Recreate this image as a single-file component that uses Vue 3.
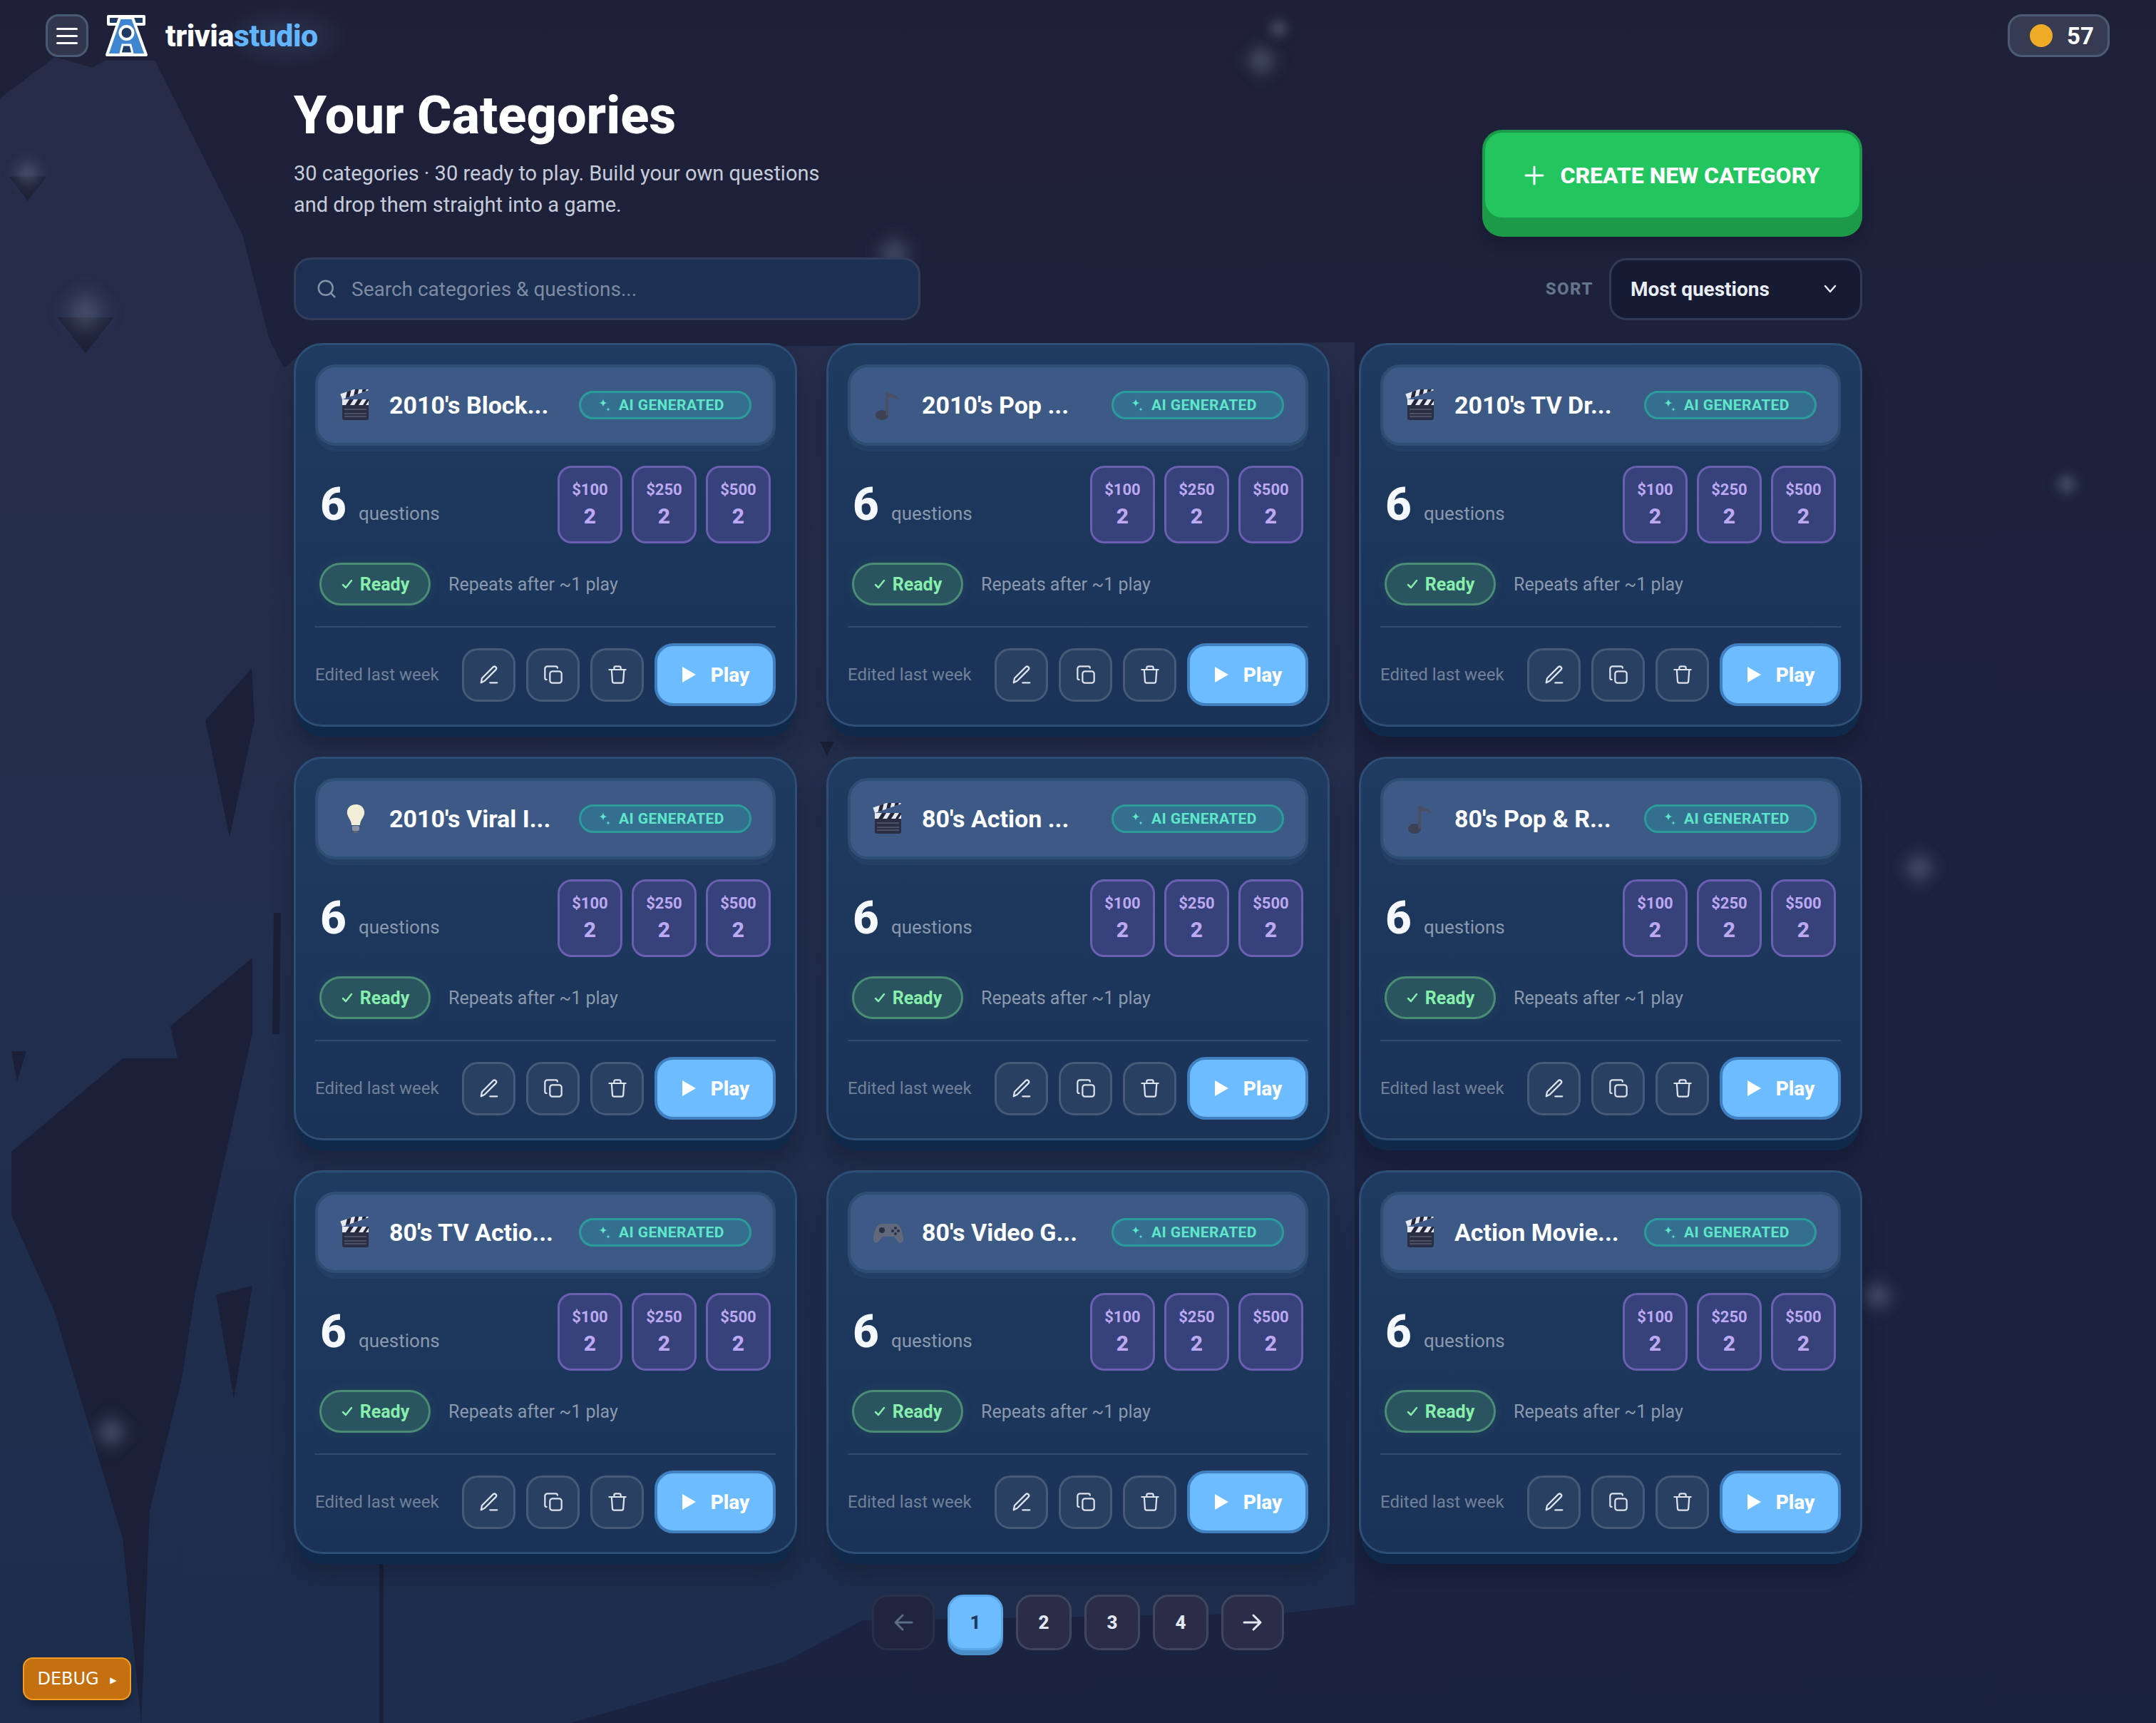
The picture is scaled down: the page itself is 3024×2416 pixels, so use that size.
<template>
  <div class="page">
    <!-- decorative backdrop: hills + sparkles -->
    <svg class="backdrop" width="3024" height="2416" viewBox="0 0 3024 2416">
      <defs>
        <linearGradient id="hill" x1="0" y1="0" x2="0" y2="1">
          <stop offset="0" stop-color="#272c48" />
          <stop offset="0.5" stop-color="#222e4c" />
          <stop offset="1" stop-color="#1d2d4d" />
        </linearGradient>
        <radialGradient id="logoGlow">
          <stop offset="0" stop-color="#2e3552" stop-opacity="0.9" />
          <stop offset="1" stop-color="#2e3552" stop-opacity="0" />
        </radialGradient>
        <filter id="soft" x="-50%" y="-50%" width="200%" height="200%">
          <feGaussianBlur stdDeviation="4" />
        </filter>
      </defs>
      <ellipse cx="400" cy="52" rx="90" ry="46" fill="url(#logoGlow)" />
      <path fill="url(#hill)" d="M0 138 L77 80 L130 95 L147 85 L217 85 L340 329 L377 474 L398 516 L430 490 L1900 480 L1900 2250 L1852 2256 L1800 2262 L1210 2272 L1100 2330 L800 2416 L0 2416 Z" />
      <g fill="#1b2038">
        <path d="M288 1010 L353 937 L357 1010 L322 1174 Z" />
        <path d="M16 1615 L172 1484 L249 1484 L239 1439 L354 1343 L354 1449 L274 1812 L255 1933 L210 2118 L198 2416 L172 2157 L76 1838 L16 1704 Z" />
        <path d="M303 1815 L354 1803 L328 1962 Z" />
        <path d="M16 1474 L37 1474 L24 1516 Z" />
        <path d="M384 1280 L394 1280 L392 1450 L382 1450 Z" />
        <path d="M525 2056 L545 2056 L538 2090 L538 2416 L532 2416 L532 2090 Z" />
        <path d="M1150 1040 L1170 1040 L1160 1060 Z" />
      </g>
      <g v-for="(s, i) in sparkles" :key="i" :transform="`translate(${s.x} ${s.y}) scale(${s.r / 10})`">
        <path v-if="s.dark" d="M-11 2 L0 16 L11 2 Z" fill="#1d2138" />
        <path d="M0 -10 C1 -3 3 -1 10 0 C3 1 1 3 0 10 C-1 3 -3 1 -10 0 C-3 -1 -1 -3 0 -10 Z" fill="#69738c" opacity="0.75" filter="url(#soft)" />
      </g>
    </svg>

    <header class="topbar">
      <div class="brand">
        <button class="menu-btn">
          <span></span><span></span><span></span>
        </button>
        <svg class="logo" width="60" height="60" viewBox="0 0 60 60">
          <rect x="2" y="1" width="54" height="15" rx="2" fill="#fff" />
          <rect x="6" y="5" width="13" height="7" fill="#1e3a60" />
          <rect x="39" y="5" width="13" height="7" fill="#1e3a60" />
          <path d="M20 5 L38 5 L57 57 L2 57 Z" fill="#3f86d0" stroke="#fff" stroke-width="4" stroke-linejoin="round" />
          <circle cx="29.500" cy="26" r="9" fill="#1e3a60" stroke="#fff" stroke-width="4" />
          <path d="M21 55 L24 43 L35 43 L38 55 Z" fill="#1e3a60" stroke="#fff" stroke-width="3" />
        </svg>
        <div class="wordmark">trivia<span>studio</span></div>
      </div>
      <div class="coins">
        <i class="coin"></i>
        <b>57</b>
      </div>
    </header>

    <main class="content">
      <section class="hero">
        <div>
          <h1>Your Categories</h1>
          <p>30 categories · 30 ready to play. Build your own questions<br />and drop them straight into a game.</p>
        </div>
        <button class="create-btn">
          <svg width="28" height="28" viewBox="0 0 28 28" fill="none" stroke="#fff" stroke-width="3" stroke-linecap="round"><path d="M14 2v24M2 14h24" /></svg>
          CREATE NEW CATEGORY
        </button>
      </section>

      <section class="toolbar">
        <div class="search">
          <svg width="30" height="30" viewBox="0 0 24 24" fill="none" stroke="#8492a8" stroke-width="2" stroke-linecap="round"><circle cx="11" cy="11" r="8" /><path d="m21 21-4.300-4.300" /></svg>
          <span>Search categories &amp; questions...</span>
        </div>
        <div class="sort">
          <span class="sort-label">SORT</span>
          <div class="sort-select">
            <span>Most questions</span>
            <svg width="20" height="20" viewBox="0 0 20 20" fill="none" stroke="#e9edf5" stroke-width="2.500" stroke-linecap="round" stroke-linejoin="round"><path d="M3 6l7 8 7-8" /></svg>
          </div>
        </div>
      </section>

      <section class="grid">
        <article v-for="card in cards" :key="card.name" class="card">
          <div class="card-head">
            <svg class="emoji" width="44" height="44" viewBox="0 0 44 44">
              <template v-if="card.icon === 'clapper'">
                <rect x="3" y="21" width="37" height="22" rx="3" fill="#2b2f45" />
                <path d="M6 28h31M6 34h31M6 38h31" stroke="#6c7286" stroke-width="1" />
                <rect x="3" y="14" width="37" height="8" fill="#e6e9f0" />
                <path d="M8 22l5-8h6l-5 8zM20 22l5-8h6l-5 8zM32 22l5-8h3v2l-4 6z" fill="#23263a" />
                <g transform="rotate(-19 3 14)">
                  <rect x="3" y="6" width="39" height="8" fill="#e6e9f0" />
                  <path d="M8 14l5-8h6l-5 8zM20 14l5-8h6l-5 8zM32 14l5-8h5v2l-4 6z" fill="#23263a" />
                </g>
              </template>
              <template v-else-if="card.icon === 'note'">
                <ellipse cx="13" cy="36" rx="9" ry="7" fill="#3c4156" />
                <rect x="18" y="4" width="4" height="32" fill="#4a4f66" />
                <path d="M18 3 C24 7 36 6 37 15 C33 11 26 11 22 12 Z" fill="#4a4f66" />
              </template>
              <template v-else-if="card.icon === 'bulb'">
                <path d="M22 2 C13 2 9 9 10 15 C11 21 16 24 16 31 L28 31 C28 24 33 21 34 15 C35 9 31 2 22 2 Z" fill="#f3efd6" />
                <rect x="17" y="32" width="10" height="7" rx="2" fill="#8d93a3" />
                <rect x="19" y="39" width="6" height="3" rx="1" fill="#5f6578" />
              </template>
              <template v-else>
                <path d="M12 10 H32 C39 10 43 24 43 32 C43 38 37 38 34 33 L30 28 H14 L10 33 C7 38 1 38 1 32 C1 24 5 10 12 10 Z" fill="#62687c" />
                <circle cx="13" cy="19" r="4" fill="#2b2f45" />
                <circle cx="32" cy="16" r="2" fill="#2b2f45" />
                <circle cx="36" cy="20" r="2" fill="#2b2f45" />
                <circle cx="28" cy="20" r="2" fill="#2b2f45" />
                <circle cx="32" cy="24" r="2" fill="#2b2f45" />
              </template>
            </svg>
            <h3>{{ card.name }}</h3>
            <span class="ai-badge">
              <svg width="16" height="20" viewBox="0 0 16 20" fill="#5ee6c9"><path d="M6 1 C6.500 5 8 6.500 12 7 C8 7.500 6.500 9 6 13 C5.500 9 4 7.500 0 7 C4 6.500 5.500 5 6 1 Z" /><path d="M13 13 C13.200 15 14 15.800 16 16 C14 16.200 13.200 17 13 19 C12.800 17 12 16.200 10 16 C12 15.800 12.800 15 13 13 Z" /></svg>
              AI GENERATED
            </span>
          </div>

          <div class="stat-row">
            <div class="count"><b>6</b><span>questions</span></div>
            <div class="prices">
              <div v-for="p in prices" :key="p" class="price">
                <span>{{ p }}</span>
                <b>2</b>
              </div>
            </div>
          </div>

          <div class="status-row">
            <span class="ready">
              <svg width="18" height="18" viewBox="0 0 18 18" fill="none" stroke="#86efac" stroke-width="2.500" stroke-linecap="round" stroke-linejoin="round"><path d="M3 10l4 4 8-10" /></svg>
              Ready
            </span>
            <span class="repeats">Repeats after ~1 play</span>
          </div>

          <div class="card-foot">
            <span class="edited">Edited last week</span>
            <button class="icon-btn">
              <svg width="30" height="30" viewBox="0 0 24 24" fill="none" stroke="#dde4ee" stroke-width="1.800" stroke-linecap="round" stroke-linejoin="round"><path d="M13 21h8" /><path d="M16.500 3.500a2.120 2.120 0 0 1 3 3L7 19l-4 2 1-5Z" /></svg>
            </button>
            <button class="icon-btn">
              <svg width="28" height="28" viewBox="0 0 24 24" fill="none" stroke="#dde4ee" stroke-width="1.900" stroke-linecap="round" stroke-linejoin="round"><rect x="8" y="8" width="14" height="14" rx="3" /><path d="M4 18c-1.100 0-2-.9-2-2V5c0-1.700 1.300-3 3-3h10c1.100 0 2 .9 2 2" /></svg>
            </button>
            <button class="icon-btn">
              <svg width="28" height="28" viewBox="0 0 24 24" fill="none" stroke="#dde4ee" stroke-width="1.900" stroke-linecap="round" stroke-linejoin="round"><path d="M2 6h20" /><path d="M8 6V4a2 2 0 0 1 2-2h4a2 2 0 0 1 2 2v2" /><path d="M20 6l-1 14a2 2 0 0 1-2 2H8a2 2 0 0 1-2-2L5 6" /></svg>
            </button>
            <button class="play-btn">
              <svg width="22" height="24" viewBox="0 0 22 24" fill="#fff"><path d="M2 1 L21 12 L2 23 Z" /></svg>
              Play
            </button>
          </div>
        </article>
      </section>

      <nav class="pager">
        <button class="page-btn wide off">
          <svg width="28" height="28" viewBox="0 0 28 28" fill="none" stroke="#5b6c85" stroke-width="3" stroke-linecap="round" stroke-linejoin="round"><path d="M26 14H3M13 4L3 14l10 10" /></svg>
        </button>
        <button v-for="n in 4" :key="n" class="page-btn" :class="{ active: n === 1 }">{{ n }}</button>
        <button class="page-btn wide">
          <svg width="28" height="28" viewBox="0 0 28 28" fill="none" stroke="#e2e8f0" stroke-width="3" stroke-linecap="round" stroke-linejoin="round"><path d="M2 14h23M15 4l10 10-10 10" /></svg>
        </button>
      </nav>
    </main>

    <button class="debug">DEBUG <small>▶</small></button>
  </div>
</template>

<script setup>
const prices = ['$100', '$250', '$500']

const cards = [
  { name: "2010's Block...", icon: 'clapper' },
  { name: "2010's Pop ...", icon: 'note' },
  { name: "2010's TV Dr...", icon: 'clapper' },
  { name: "2010's Viral I...", icon: 'bulb' },
  { name: "80's Action ...", icon: 'clapper' },
  { name: "80's Pop & R...", icon: 'note' },
  { name: "80's TV Actio...", icon: 'clapper' },
  { name: "80's Video G...", icon: 'game' },
  { name: 'Action Movie...', icon: 'clapper' }
]

// background sparkles
const sparkles = [
  { x: 1793, y: 40, r: 18 },
  { x: 1769, y: 85, r: 28 },
  { x: 1254, y: 355, r: 30 },
  { x: 39, y: 243, r: 24, dark: true },
  { x: 120, y: 438, r: 36, dark: true },
  { x: 2899, y: 679, r: 20 },
  { x: 2692, y: 1217, r: 28 },
  { x: 2633, y: 1817, r: 28 },
  { x: 156, y: 2008, r: 28 }
]
</script>

<style>
body {
  margin: 0;
  background: #1c2240;
}
</style>

<style scoped>
.page {
  position: relative;
  width: 3024px;
  height: 2416px;
  overflow: hidden;
  background: linear-gradient(180deg, #1e2037 0%, #1d2240 50%, #1a2340 100%);
  font-family: Roboto, "Noto Sans", sans-serif;
  color: #fff;
}
.backdrop {
  position: absolute;
  left: 0;
  top: 0;
}
button {
  font-family: inherit;
  cursor: pointer;
  padding: 0;
}
.topbar,
.content {
  position: relative;
}

/* top bar */
.topbar {
  display: flex;
  justify-content: space-between;
  align-items: center;
  padding: 20px 65px 0 64px;
}
.brand {
  display: flex;
  align-items: center;
  gap: 24px;
}
.menu-btn {
  width: 60px;
  height: 60px;
  box-sizing: border-box;
  background: #31364d;
  border: 3px solid #4a5a73;
  border-radius: 18px;
  display: flex;
  flex-direction: column;
  align-items: center;
  justify-content: center;
  gap: 7px;
}
.menu-btn span {
  width: 30px;
  height: 3px;
  border-radius: 2px;
  background: #fff;
}
.logo {
  display: block;
}
.wordmark {
  font-size: 43px;
  font-weight: 800;
  letter-spacing: -0.5px;
}
.wordmark span {
  color: #62b6ff;
}
.coins {
  box-sizing: border-box;
  width: 143px;
  height: 60px;
  display: flex;
  align-items: center;
  gap: 20px;
  padding-left: 28px;
  background: #363b52;
  border: 3px solid #4d5a74;
  border-radius: 20px;
}
.coin {
  width: 32px;
  height: 32px;
  border-radius: 50%;
  background: #f0ab26;
}
.coins b {
  font-size: 33px;
}

/* hero */
.content {
  width: 2200px;
  margin: 0 auto;
}
.hero {
  display: flex;
  justify-content: space-between;
  align-items: flex-end;
  margin-top: 34px;
}
.hero h1 {
  margin: 0;
  font-size: 74px;
  line-height: 96px;
  font-weight: 800;
}
.hero p {
  margin: 11px 0 0;
  font-size: 29px;
  line-height: 44px;
  color: #c5ccd9;
}
.create-btn {
  width: 533px;
  height: 127px;
  margin-bottom: 0;
  display: flex;
  align-items: center;
  justify-content: center;
  gap: 22px;
  background: #22c55e;
  color: #fff;
  border: 4px solid #1b9a49;
  border-radius: 28px;
  font-size: 32px;
  font-weight: 800;
  box-shadow: 0 23px 0 #1c9a47, 0 34px 16px rgba(10, 14, 30, 0.25);
}

/* search + sort */
.toolbar {
  display: flex;
  justify-content: space-between;
  align-items: center;
  margin-top: 52px;
}
.search {
  box-sizing: border-box;
  width: 879px;
  height: 88px;
  display: flex;
  align-items: center;
  gap: 20px;
  padding-left: 28px;
  background: #1b3052;
  border: 3px solid #333d5a;
  border-radius: 24px;
  font-size: 28px;
  color: #7e8ba3;
}
.sort {
  display: flex;
  align-items: center;
  gap: 22px;
}
.sort-label {
  font-size: 24px;
  font-weight: 800;
  letter-spacing: 1.5px;
  color: #64748b;
}
.sort-select {
  box-sizing: border-box;
  width: 355px;
  height: 87px;
  display: flex;
  align-items: center;
  justify-content: space-between;
  padding: 0 32px 0 27px;
  background: #161b33;
  border: 3px solid #333a55;
  border-radius: 24px;
  font-size: 28px;
  font-weight: 700;
  color: #e9edf5;
}

/* cards */
.grid {
  display: grid;
  grid-template-columns: repeat(3, 706px);
  column-gap: 41px;
  row-gap: 42px;
  margin-top: 32px;
}
.card {
  box-sizing: border-box;
  height: 538px;
  padding: 27px 27px 26px;
  background: linear-gradient(180deg, #1f3b60 0%, #1b3257 100%);
  border: 3px solid #2d4f75;
  border-radius: 40px;
  box-shadow: 0 18px 0 -4px #10294a, 0 30px 30px rgba(10, 14, 30, 0.3);
  display: flex;
  flex-direction: column;
}
.card-head {
  box-sizing: border-box;
  height: 114px;
  margin-bottom: 28px;
  display: flex;
  align-items: center;
  padding: 0 30px 0 31px;
  background: #3c5a85;
  border: 4px solid #2f4e74;
  border-radius: 28px;
  box-shadow: 0 8px 0 #233f63;
}
.emoji {
  flex: none;
  margin-right: 25px;
}
.card-head h3 {
  flex: 1;
  margin: 0;
  font-size: 34px;
  font-weight: 700;
  white-space: nowrap;
  overflow: hidden;
}
.ai-badge {
  box-sizing: border-box;
  height: 40px;
  width: 242px;
  flex: none;
  display: flex;
  align-items: center;
  gap: 12px;
  padding-left: 25px;
  background: #356f8f;
  border: 3px solid #2a9d9a;
  border-radius: 20px;
  font-size: 21px;
  font-weight: 700;
  letter-spacing: 0.4px;
  color: #5ee6c9;
  white-space: nowrap;
}
.stat-row {
  display: flex;
  justify-content: space-between;
  align-items: center;
  padding: 0 7px;
  margin-bottom: 27px;
}
.count {
  display: flex;
  align-items: baseline;
  gap: 17px;
}
.count b {
  font-size: 64px;
  line-height: 64px;
  font-weight: 800;
  color: #f5f8fc;
}
.count span {
  font-size: 26px;
  color: #8a99ad;
}
.prices {
  display: flex;
  gap: 13px;
}
.price {
  box-sizing: border-box;
  width: 91px;
  height: 109px;
  display: flex;
  flex-direction: column;
  align-items: center;
  justify-content: center;
  gap: 7px;
  background: #37427a;
  border: 3px solid #6a5fb0;
  border-radius: 20px;
  color: #bca9f2;
}
.price span {
  font-size: 22px;
  font-weight: 700;
}
.price b {
  font-size: 30px;
  line-height: 36px;
  font-weight: 800;
}
.status-row {
  display: flex;
  align-items: center;
  gap: 25px;
  padding: 0 6px;
  height: 60px;
  margin-bottom: 29px;
}
.ready {
  box-sizing: border-box;
  width: 156px;
  height: 60px;
  display: flex;
  align-items: center;
  justify-content: center;
  gap: 9px;
  background: #2a5460;
  border: 3px solid #4a8d74;
  border-radius: 30px;
  font-size: 25px;
  font-weight: 700;
  color: #86efac;
  box-shadow: 0 0 18px rgba(74, 222, 128, 0.08);
}
.repeats {
  font-size: 25px;
  color: #8a99ad;
}
.card-foot {
  display: flex;
  align-items: center;
  gap: 15px;
  border-top: 2px solid #2f4a6e;
  padding-top: 22px;
}
.edited {
  flex: 1;
  font-size: 24px;
  color: #71819a;
  white-space: nowrap;
}
.icon-btn {
  width: 75px;
  height: 75px;
  flex: none;
  display: flex;
  align-items: center;
  justify-content: center;
  background: #2a4062;
  border: 3px solid #475a78;
  border-radius: 22px;
}
.play-btn {
  box-sizing: border-box;
  width: 170px;
  height: 88px;
  flex: none;
  display: flex;
  align-items: center;
  justify-content: center;
  gap: 20px;
  background: #6cbcff;
  border: 4px solid #4080c0;
  border-radius: 26px;
  color: #fff;
  font-size: 28px;
  font-weight: 800;
}

/* pagination */
.pager {
  display: flex;
  justify-content: center;
  gap: 18px;
  margin-top: 57px;
}
.page-btn {
  box-sizing: border-box;
  width: 78px;
  height: 78px;
  display: flex;
  align-items: center;
  justify-content: center;
  background: #2a2c48;
  border: 3px solid #41455e;
  border-radius: 22px;
  color: #e2e8f0;
  font-size: 26px;
  font-weight: 800;
}
.page-btn.wide {
  width: 88px;
}
.page-btn.off {
  background: #20243f;
  border-color: #2b3049;
}
.page-btn.active {
  background: #6cbcff;
  border-color: #5aa6e8;
  color: #1e3a5f;
  box-shadow: 0 7px 0 #4a8fcc;
}

.debug {
  position: absolute;
  left: 32px;
  bottom: 32px;
  width: 152px;
  height: 60px;
  box-sizing: border-box;
  background: #c46f10;
  border: 2px solid #f39c1f;
  border-radius: 14px;
  color: #fff;
  font-family: "DejaVu Sans", sans-serif;
  font-size: 24px;
  box-shadow: 0 6px 8px rgba(10, 14, 30, 0.35);
}
.debug small {
  font-size: 12px;
  margin-left: 8px;
  vertical-align: 2px;
}
</style>
